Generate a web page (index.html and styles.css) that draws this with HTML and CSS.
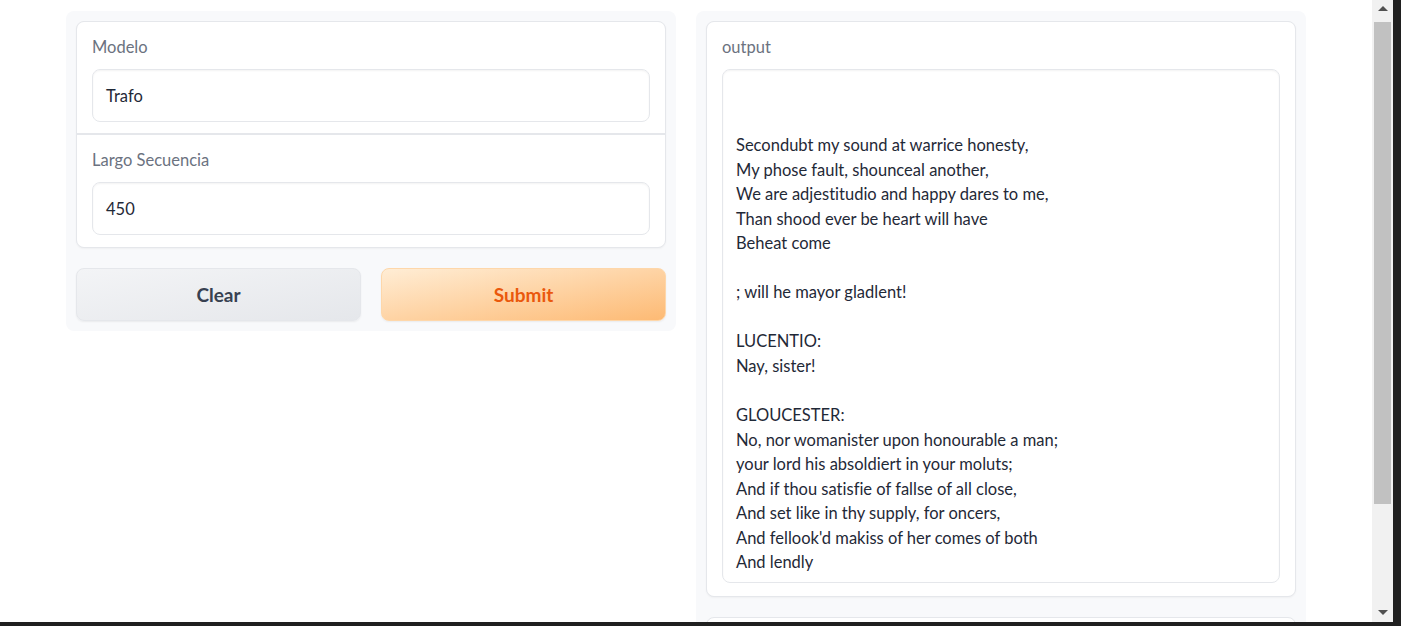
FILE: index.html
```html
<!DOCTYPE html>
<html lang="es">
<head>
<meta charset="utf-8">
<title>Gradio</title>
<link rel="stylesheet" href="styles.css">
</head>
<body>
<div class="frame">
  <div class="viewport">
    <div class="app">
      <div class="col col-left">
        <div class="form">
          <div class="block block-first">
            <div class="label">Modelo</div>
            <div class="input">Trafo</div>
          </div>
          <div class="block block-second">
            <div class="label">Largo Secuencia</div>
            <div class="input">450</div>
          </div>
        </div>
        <div class="buttons">
          <button class="btn btn-secondary">Clear</button>
          <button class="btn btn-primary">Submit</button>
        </div>
      </div>
      <div class="col col-right">
        <div class="form output-form">
          <div class="block">
            <div class="label">output</div>
            <div class="textarea"><br><br>Secondubt my sound at warrice honesty,<br>My phose fault, shounceal another,<br>We are adjestitudio and happy dares to me,<br>Than shood ever be heart will have<br>Beheat come<br><br>; will he mayor gladlent!<br><br>LUCENTIO:<br>Nay, sister!<br><br>GLOUCESTER:<br>No, nor womanister upon honourable a man;<br>your lord his absoldiert in your moluts;<br>And if thou satisfie of fallse of all close,<br>And set like in thy supply, for oncers,<br>And fellook'd makiss of her comes of both<br>And lendly</div>
          </div>
        </div>
        <div class="form next-form"></div>
      </div>
    </div>
  </div>
  <div class="scrollbar">
    <div class="arrow arrow-up"></div>
    <div class="thumb"></div>
    <div class="arrow arrow-down"></div>
  </div>
  <div class="edge"></div>
</div>
<div class="bottom-edge"></div>
</body>
</html>
```

FILE: styles.css
```css
* { box-sizing: border-box; }
html, body { margin: 0; padding: 0; }
body {
  width: 1401px;
  height: 626px;
  overflow: hidden;
  background: #ffffff;
  font-family: "Lato", "Open Sans", sans-serif;
  font-variant-ligatures: none;
  color: #1f2937;
}
.frame {
  display: flex;
  height: 622px;
}
.viewport {
  width: 1372px;
  height: 622px;
  overflow: hidden;
}
.app {
  width: 1240px;
  margin: 0 auto;
  padding-top: 11px;
  display: flex;
  gap: 20px;
  align-items: flex-start;
}
.col {
  width: 610px;
  background: #f8f9fb;
  border-radius: 8px;
  padding: 10px;
}
.col-right {
  height: 700px;
}
.form {
  background: #e5e7eb;
  border: 1px solid #e5e7eb;
  border-radius: 8px;
  display: flex;
  flex-direction: column;
  gap: 2px;
  overflow: hidden;
  box-shadow: 0 1px 2px rgba(0,0,0,0.04);
}
.block {
  background: #ffffff;
  padding: 15px 15px 12px;
}
.block-first {
  padding-bottom: 11px;
}
.label {
  font-size: 16.5px;
  line-height: 20px;
  color: #6b7280;
  margin-bottom: 12px;
}
.input {
  height: 53px;
  border: 1px solid #e5e7eb;
  border-radius: 8px;
  padding: 0 13px;
  display: flex;
  align-items: center;
  font-size: 16.5px;
  color: #1f2937;
  box-shadow: inset 0 1px 2px rgba(0,0,0,0.05);
}
.buttons {
  display: flex;
  gap: 20px;
  margin-top: 20px;
}
.btn {
  flex: 1;
  height: 53px;
  border-radius: 8px;
  font-family: inherit;
  font-size: 19px;
  font-weight: 700;
  cursor: pointer;
}
.btn-secondary {
  border: 1px solid #e5e7eb;
  background: linear-gradient(to bottom right, #f3f4f6, #e5e7eb);
  color: #374151;
  box-shadow: 0 1px 2px rgba(0,0,0,0.06);
}
.btn-primary {
  border: 1px solid #fed7aa;
  background: linear-gradient(to bottom right, #ffedd5, #fdba74);
  color: #ea580c;
  box-shadow: 0 1px 2px rgba(0,0,0,0.06);
}
.output-form .block {
  padding-bottom: 13px;
}
.textarea {
  height: 514px;
  border: 1px solid #e5e7eb;
  border-radius: 8px;
  padding: 14px 13px 0;
  font-size: 16.5px;
  line-height: 24.55px;
  color: #1f2937;
  box-shadow: inset 0 1px 2px rgba(0,0,0,0.05);
  overflow: hidden;
}
.next-form {
  margin-top: 20px;
  height: 60px;
  background: #ffffff;
}
.scrollbar {
  width: 21px;
  height: 622px;
  background: #f1f1f1;
  display: flex;
  flex-direction: column;
  align-items: center;
}
.thumb {
  width: 17px;
  height: 482px;
  background: #c1c1c1;
  margin-top: 11px;
}
.arrow {
  width: 0;
  height: 0;
  border-left: 5px solid transparent;
  border-right: 5px solid transparent;
}
.arrow-up {
  margin-top: 6px;
  border-bottom: 5px solid #505050;
}
.arrow-down {
  margin-top: auto;
  margin-bottom: 7px;
  border-top: 5px solid #505050;
}
.edge {
  width: 8px;
  height: 622px;
  background: #202020;
}
.bottom-edge {
  height: 4px;
  background: #202020;
}
```
